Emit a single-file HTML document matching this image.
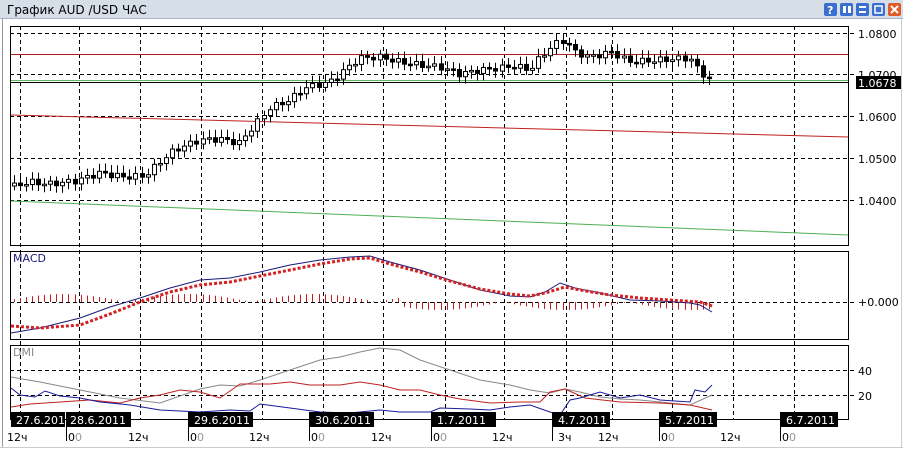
<!DOCTYPE html>
<html><head><meta charset="utf-8"><style>
body{margin:0;width:903px;height:451px;background:#fff;overflow:hidden;font-family:"DejaVu Sans",sans-serif;}
</style></head><body>
<svg width="903" height="451" xmlns="http://www.w3.org/2000/svg" style="position:absolute;left:0;top:0" font-family="DejaVu Sans, sans-serif">
<rect x="0" y="0" width="903" height="451" fill="#fff"/>
<rect x="0" y="0" width="903" height="18" fill="#d6dee8"/>
<line x1="0" y1="18.5" x2="903" y2="18.5" stroke="#aab4c0"/>
<text x="7" y="14" font-size="12" fill="#000">График AUD /USD  ЧАС</text>
<g>
<rect x="824" y="3" width="13" height="13" rx="2" fill="#3a6fd0"/><text x="827" y="14" font-size="11" font-weight="bold" fill="#fff">?</text>
<rect x="840" y="3" width="13" height="13" rx="2" fill="#3a6fd0"/><rect x="843" y="6" width="3" height="7" fill="#fff"/><rect x="848" y="6" width="3" height="7" fill="#fff"/>
<rect x="856" y="3" width="13" height="13" rx="2" fill="#3a6fd0"/><rect x="859" y="6" width="7" height="2" fill="#fff"/><rect x="859" y="11" width="7" height="2" fill="#fff"/>
<rect x="872" y="3" width="13" height="13" rx="2" fill="#3a6fd0"/><rect x="875" y="6" width="7" height="7" fill="none" stroke="#fff" stroke-width="1.5"/>
<rect x="888" y="3" width="13" height="13" rx="2" fill="#e05a2a"/><path d="M891 6l7 7M898 6l-7 7" stroke="#fff" stroke-width="2"/>
</g>
<line x1="2.5" y1="19" x2="2.5" y2="448" stroke="#999"/>
<line x1="0" y1="447.5" x2="903" y2="447.5" stroke="#ccc"/>
<line x1="901.5" y1="19" x2="901.5" y2="448" stroke="#ccc"/>

<g stroke="#000" stroke-dasharray="4,3" stroke-width="1">
<path d="M20.5 26V419M79.5 26V419M140.5 26V419M201.5 26V419M262.5 26V419M323.5 26V419M383.5 26V419M445.5 26V419M504.5 26V419M566.5 26V419M612.5 26V419M672.5 26V419M733.5 26V419M794.5 26V419"/>
<path d="M10 33.5H855M10 74.5H855M10 116.5H855M10 158.5H855M10 200.5H855M10 302.5H855M10 370.5H855M10 395.5H855"/>
</g>
<g fill="none" stroke="#000">
<rect x="10.5" y="26.5" width="838" height="219"/>
<rect x="10.5" y="251.5" width="838" height="88"/>
<rect x="10.5" y="345.5" width="838" height="74"/>
</g>
<line x1="11" y1="54.5" x2="848" y2="54.5" stroke="#b02020"/>
<line x1="11" y1="80.5" x2="848" y2="80.5" stroke="#5cb85c"/>
<line x1="11" y1="82.5" x2="848" y2="82.5" stroke="#000"/>
<line x1="11" y1="115" x2="848" y2="137" stroke="#c02020"/>
<line x1="11" y1="201" x2="848" y2="235" stroke="#4caf50"/>
<g id="candles" stroke="#000" fill="#fff"></g>
<g font-size="11" fill="#000">
<text x="858" y="38">1.0800</text><text x="858" y="79">1.0700</text>
<rect x="856" y="76" width="45" height="13" fill="#000"/><text x="858" y="87" fill="#fff">1.0678</text>
<text x="858" y="121">1.0600</text><text x="858" y="163">1.0500</text><text x="858" y="205">1.0400</text>
<text x="858" y="306">+0.000</text>
<text x="858" y="375">40</text><text x="858" y="400">20</text>
<text x="13" y="262" fill="#1a1a7a">MACD</text>
<text x="13" y="356" fill="#888">DMI</text>
</g>
<g id="hist" stroke="#c02020"></g>
<polyline fill="none" stroke="#1a1a7a" points="11,333 40,328 80,318 110,307 140,298 170,288 200,280 230,278 260,272 290,265 320,260 350,257 370,256 390,262 420,270 450,280 480,290 510,296 530,297 545,292 560,283 575,288 600,293 630,300 660,301 690,303 700,305 712,312"/>
<polyline fill="none" stroke="#d42020" stroke-width="3" stroke-dasharray="3,2" points="11,326 40,328 80,325 110,314 140,302 170,292 200,285 230,282 260,276 290,270 320,264 350,259 370,258 390,264 420,272 450,281 480,289 510,294 530,296 545,293 565,287 580,290 610,295 640,298 670,300 700,302 712,306"/>
<polyline fill="none" stroke="#888" points="11,377 40,382 80,390 120,398 160,403 200,389 220,385 240,386 260,380 290,370 320,360 340,357 360,352 380,348 400,350 420,360 450,370 480,380 510,385 530,390 550,393 565,389 580,392 600,397 620,399 640,400 660,402 690,405 712,395"/>
<polyline fill="none" stroke="#c02020" points="11,407 30,404 60,402 90,400 120,403 140,398 160,395 180,390 200,392 220,398 240,384 270,384 290,382 310,385 340,385 360,382 380,385 400,390 420,390 440,395 460,399 490,403 520,402 540,402 550,392 565,389 585,398 620,402 660,403 690,405 712,410"/>
<polyline fill="none" stroke="#1a1a9a" points="11,388 20,395 35,397 45,391 60,396 80,398 100,402 130,405 160,410 200,412 230,410 250,411 260,404 290,408 320,412 350,413 380,410 400,412 430,412 440,408 470,409 490,410 510,407 530,405 550,412 560,415 570,400 580,398 600,392 620,398 640,395 660,400 690,402 695,390 705,392 712,385"/>
<g fill="#000"><rect x="11" y="412" width="54" height="15"/><rect x="66" y="412" width="65" height="15"/><rect x="188" y="412" width="65" height="15"/><rect x="309" y="412" width="65" height="15"/><rect x="431" y="412" width="65" height="15"/><rect x="552" y="412" width="58" height="15"/><rect x="659" y="412" width="58" height="15"/><rect x="780" y="412" width="58" height="15"/></g>
<g font-size="11" fill="#fff"><text x="16" y="424">27.6.201</text><text x="70" y="424">28.6.2011</text><text x="194" y="424">29.6.2011</text><text x="315" y="424">30.6.2011</text><text x="437" y="424">1.7.2011</text><text x="558" y="424">4.7.2011</text><text x="665" y="424">5.7.2011</text><text x="786" y="424">6.7.2011</text></g>
<g stroke="#000"><path d="M66.5 412V441M188.5 412V441M309.5 412V441M431.5 412V441M552.5 412V441M659.5 412V441M780.5 412V441"/></g>
<g font-size="11" fill="#000"><text x="7" y="441">12ч</text><text x="68" y="441">0<tspan fill="#999">0</tspan></text><text x="128" y="441">12ч</text><text x="190" y="441">0<tspan fill="#999">0</tspan></text><text x="249" y="441">12ч</text><text x="311" y="441">0<tspan fill="#999">0</tspan></text><text x="371" y="441">12ч</text><text x="433" y="441">0<tspan fill="#999">0</tspan></text><text x="492" y="441">12ч</text><text x="558" y="441">3ч</text><text x="598" y="441">12ч</text><text x="661" y="441">0<tspan fill="#999">0</tspan></text><text x="720" y="441">12ч</text><text x="782" y="441">0<tspan fill="#999">0</tspan></text></g>
</svg>
<script>
var k=[[14,186],[30,182],[50,184],[75,181],[100,173],[125,177],[145,176],[160,162],[175,150],[200,140],[220,139],[240,143],[255,125],[270,108],[290,100],[305,88],[330,82],[345,70],[360,58],[380,57],[400,62],[420,65],[440,67],[460,74],[480,70],[500,68],[515,66],[530,70],[540,58],[555,44],[565,40],[575,52],[590,57],[612,52],[630,62],[660,60],[690,58],[700,72],[712,80]];
function py(x){for(var i=1;i<k.length;i++)if(x<=k[i][0]){var a=k[i-1],b=k[i];return a[1]+(b[1]-a[1])*(x-a[0])/(b[0]-a[0]);}return 80;}
var s='',h='',p=py(14);
for(var x=14;x<=712;x+=6.1){var c=py(x)+Math.sin(x*1.7)*3;var t=Math.min(p,c),b=Math.max(p,c);if(b-t<1.5)b=t+1.5;var up=c<p;
s+='<line x1="'+(x|0)+'.5" x2="'+(x|0)+'.5" y1="'+(t-4-Math.abs(Math.sin(x))*4)+'" y2="'+(b+4+Math.abs(Math.cos(x))*3)+'"/>';
s+='<rect x="'+((x|0)-1.5)+'" y="'+t+'" width="4" height="'+(b-t)+'" fill="'+(up?'#fff':'#000')+'"/>';p=c;
var hv=Math.sin(x/40)*8;h+='<line x1="'+(x|0)+'.5" x2="'+(x|0)+'.5" y1="302" y2="'+(302-Math.abs(hv)*(x<400?1:-1))+'"/>';}
document.getElementById('candles').innerHTML=s;document.getElementById('hist').innerHTML=h;
</script>
</body></html>
